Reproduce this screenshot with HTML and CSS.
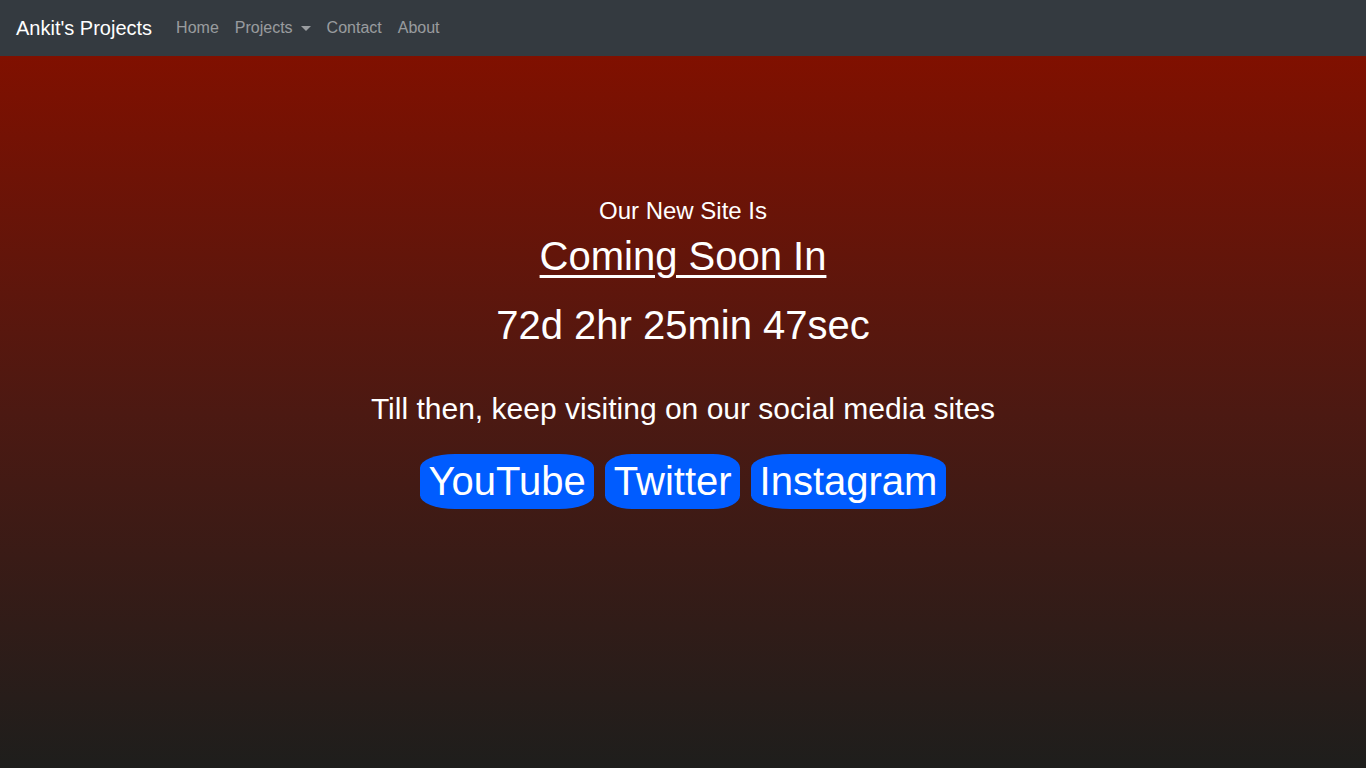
FILE: index.html
```html
<!DOCTYPE html>
<html lang="en">
<head>
<meta charset="utf-8">
<title>Ankit's Projects</title>
<link rel="stylesheet" href="styles.css">
</head>
<body>
<nav class="navbar">
  <a class="brand" href="#">Ankit's Projects</a>
  <ul class="nav">
    <li><a href="#">Home</a></li>
    <li><a href="#" class="dropdown">Projects<span class="caret"></span></a></li>
    <li><a href="#">Contact</a></li>
    <li><a href="#">About</a></li>
  </ul>
</nav>
<main class="hero">
  <p class="intro">Our New Site Is</p>
  <h1 class="title">Coming Soon In</h1>
  <p class="countdown">72d 2hr 25min 47sec</p>
  <p class="till">Till then, keep visiting on our social media sites</p>
  <div class="social">
    <a href="#" class="btn">YouTube</a>
    <a href="#" class="btn">Twitter</a>
    <a href="#" class="btn">Instagram</a>
  </div>
</main>
</body>
</html>
```
FILE: styles.css
```css
* { box-sizing: border-box; }
html, body { margin: 0; height: 100%; }
body {
  font-family: "Liberation Sans", Arial, sans-serif;
  display: flex;
  flex-direction: column;
  background: #1f1d1b;
}
.navbar {
  height: 56px;
  flex: none;
  background: #343a40;
  display: flex;
  align-items: center;
  padding: 0 16px;
}
.brand {
  color: #fff;
  text-decoration: none;
  font-size: 20px;
  margin-right: 16px;
}
.nav {
  display: flex;
  list-style: none;
  margin: 0;
  padding: 0;
}
.nav a {
  display: flex;
  align-items: center;
  color: rgba(255,255,255,0.5);
  text-decoration: none;
  font-size: 16px;
  padding: 8px 8px;
}
.caret {
  display: inline-block;
  margin-left: 8px;
  border-top: 5px solid rgba(255,255,255,0.5);
  border-left: 5px solid transparent;
  border-right: 5px solid transparent;
  margin-top: 1px;
}
.hero {
  flex: 1;
  background: linear-gradient(to bottom, #801000 0%, #4c1912 50%, #1e1e1c 100%);
  color: #fff;
  text-align: center;
  display: flex;
  flex-direction: column;
  align-items: center;
  padding-top: 141px;
}
.intro {
  margin: 0;
  font-size: 24px;
}
.title {
  margin: 9px 0 0;
  font-size: 40px;
  font-weight: normal;
  text-decoration: underline;
  text-decoration-thickness: 3px;
  text-underline-offset: 5px;
}
.countdown {
  margin: 24px 0 0;
  font-size: 40px;
}
.till {
  margin: 44px 0 0;
  font-size: 30px;
}
.social {
  margin-top: 28px;
  display: flex;
  gap: 11px;
}
.btn {
  background: #005cff;
  color: #fff;
  text-decoration: none;
  font-size: 40px;
  padding: 5px 8.5px;
  border-radius: 20% / 25%;
}
```
